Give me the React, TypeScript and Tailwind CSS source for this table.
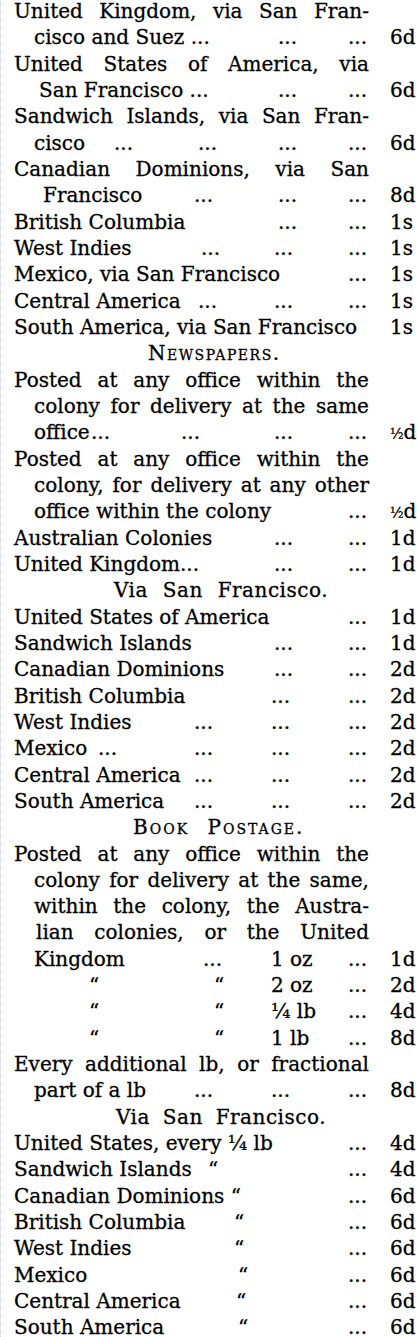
type Mark = [string, string];

type Line =
  | { k: "j"; pad: string; text: string }
  | { k: "r"; pad: string; text: string; marks?: Mark[]; price?: string }
  | { k: "h"; pad: string; text: string; cls: string };

const D = "...";

const lines: Line[] = [
  { k: "j", pad: "pl-[13px]", text: "United Kingdom, via San Fran-" },
  { k: "r", pad: "pl-[33px]", text: "cisco and Suez ...", marks: [["pl-[277px]", D], ["pl-[347px]", D]], price: "6d" },
  { k: "j", pad: "pl-[13px]", text: "United States of America, via" },
  { k: "r", pad: "pl-[38px]", text: "San Francisco ...", marks: [["pl-[277px]", D], ["pl-[347px]", D]], price: "6d" },
  { k: "j", pad: "pl-[13px]", text: "Sandwich Islands, via San Fran-" },
  { k: "r", pad: "pl-[33px]", text: "cisco", marks: [["pl-[113px]", D], ["pl-[197px]", D], ["pl-[277px]", D], ["pl-[347px]", D]], price: "6d" },
  { k: "j", pad: "pl-[13px]", text: "Canadian Dominions, via San" },
  { k: "r", pad: "pl-[42px]", text: "Francisco", marks: [["pl-[193px]", D], ["pl-[277px]", D], ["pl-[347px]", D]], price: "8d" },
  { k: "r", pad: "pl-[13px]", text: "British Columbia", marks: [["pl-[277px]", D], ["pl-[347px]", D]], price: "1s" },
  { k: "r", pad: "pl-[13px]", text: "West Indies", marks: [["pl-[200px]", D], ["pl-[273px]", D], ["pl-[347px]", D]], price: "1s" },
  { k: "r", pad: "pl-[13px]", text: "Mexico, via San Francisco", marks: [["pl-[347px]", D]], price: "1s" },
  { k: "r", pad: "pl-[13px]", text: "Central America", marks: [["pl-[197px]", D], ["pl-[273px]", D], ["pl-[347px]", D]], price: "1s" },
  { k: "r", pad: "pl-[13px]", text: "South America, via San Francisco", price: "1s" },
  { k: "h", pad: "pl-[147px]", text: "Newspapers.", cls: "tracking-[1.5px] [font-variant-caps:small-caps]" },
  { k: "j", pad: "pl-[13px]", text: "Posted at any office within the" },
  { k: "j", pad: "pl-[33px]", text: "colony for delivery at the same" },
  { k: "r", pad: "pl-[33px]", text: "office", marks: [["pl-[90px]", D], ["pl-[180px]", D], ["pl-[273px]", D], ["pl-[347px]", D]], price: "½d" },
  { k: "j", pad: "pl-[13px]", text: "Posted at any office within the" },
  { k: "j", pad: "pl-[33px]", text: "colony, for delivery at any other" },
  { k: "r", pad: "pl-[33px]", text: "office within the colony", marks: [["pl-[347px]", D]], price: "½d" },
  { k: "r", pad: "pl-[13px]", text: "Australian Colonies", marks: [["pl-[273px]", D], ["pl-[347px]", D]], price: "1d" },
  { k: "r", pad: "pl-[13px]", text: "United Kingdom...", marks: [["pl-[273px]", D], ["pl-[347px]", D]], price: "1d" },
  { k: "h", pad: "pl-[113px]", text: "Via San Francisco.", cls: "tracking-[0.5px] [word-spacing:8px]" },
  { k: "r", pad: "pl-[13px]", text: "United States of America", marks: [["pl-[347px]", D]], price: "1d" },
  { k: "r", pad: "pl-[13px]", text: "Sandwich Islands", marks: [["pl-[273px]", D], ["pl-[347px]", D]], price: "1d" },
  { k: "r", pad: "pl-[13px]", text: "Canadian Dominions", marks: [["pl-[273px]", D], ["pl-[347px]", D]], price: "2d" },
  { k: "r", pad: "pl-[13px]", text: "British Columbia", marks: [["pl-[270px]", D], ["pl-[347px]", D]], price: "2d" },
  { k: "r", pad: "pl-[13px]", text: "West Indies", marks: [["pl-[193px]", D], ["pl-[270px]", D], ["pl-[347px]", D]], price: "2d" },
  { k: "r", pad: "pl-[13px]", text: "Mexico", marks: [["pl-[97px]", D], ["pl-[193px]", D], ["pl-[270px]", D], ["pl-[347px]", D]], price: "2d" },
  { k: "r", pad: "pl-[13px]", text: "Central America", marks: [["pl-[193px]", D], ["pl-[270px]", D], ["pl-[347px]", D]], price: "2d" },
  { k: "r", pad: "pl-[13px]", text: "South America", marks: [["pl-[193px]", D], ["pl-[270px]", D], ["pl-[347px]", D]], price: "2d" },
  { k: "h", pad: "pl-[132px]", text: "Book Postage.", cls: "tracking-[2px] [word-spacing:10px] [font-variant-caps:small-caps]" },
  { k: "j", pad: "pl-[13px]", text: "Posted at any office within the" },
  { k: "j", pad: "pl-[33px]", text: "colony for delivery at the same," },
  { k: "j", pad: "pl-[33px]", text: "within the colony, the Austra-" },
  { k: "j", pad: "pl-[35px]", text: "lian colonies, or the United" },
  { k: "r", pad: "pl-[33px]", text: "Kingdom", marks: [["pl-[202px]", D], ["pl-[270px]", "1 oz"], ["pl-[347px]", D]], price: "1d" },
  { k: "r", pad: "pl-[88px]", text: "“", marks: [["pl-[213px]", "“"], ["pl-[270px]", "2 oz"], ["pl-[347px]", D]], price: "2d" },
  { k: "r", pad: "pl-[88px]", text: "“", marks: [["pl-[213px]", "“"], ["pl-[270px]", "¼ lb"], ["pl-[347px]", D]], price: "4d" },
  { k: "r", pad: "pl-[88px]", text: "“", marks: [["pl-[213px]", "“"], ["pl-[270px]", "1 lb"], ["pl-[347px]", D]], price: "8d" },
  { k: "j", pad: "pl-[13px]", text: "Every additional lb, or fractional" },
  { k: "r", pad: "pl-[33px]", text: "part of a lb", marks: [["pl-[193px]", D], ["pl-[270px]", D], ["pl-[347px]", D]], price: "8d" },
  { k: "h", pad: "pl-[115px]", text: "Via San Francisco.", cls: "tracking-[0.5px] [word-spacing:6px]" },
  { k: "r", pad: "pl-[13px]", text: "United States, every ¼ lb", marks: [["pl-[347px]", D]], price: "4d" },
  { k: "r", pad: "pl-[13px]", text: "Sandwich Islands", marks: [["pl-[207px]", "“"], ["pl-[347px]", D]], price: "4d" },
  { k: "r", pad: "pl-[13px]", text: "Canadian Dominions “", marks: [["pl-[347px]", D]], price: "6d" },
  { k: "r", pad: "pl-[13px]", text: "British Columbia", marks: [["pl-[233px]", "“"], ["pl-[347px]", D]], price: "6d" },
  { k: "r", pad: "pl-[13px]", text: "West Indies", marks: [["pl-[233px]", "“"], ["pl-[347px]", D]], price: "6d" },
  { k: "r", pad: "pl-[13px]", text: "Mexico", marks: [["pl-[237px]", "“"], ["pl-[347px]", D]], price: "6d" },
  { k: "r", pad: "pl-[13px]", text: "Central America", marks: [["pl-[235px]", "“"], ["pl-[347px]", D]], price: "6d" },
  { k: "r", pad: "pl-[13px]", text: "South America", marks: [["pl-[237px]", "“"], ["pl-[347px]", D]], price: "6d" },
];

function Price({ p }: { p?: string }) {
  if (p === "½d") {
    return (
      <span className="whitespace-nowrap">
        <span className="text-[14px]">½</span>d
      </span>
    );
  }
  return <span className="whitespace-nowrap">{p}</span>;
}

function Row({ line }: { line: Line }) {
  if (line.k === "j") {
    return (
      <div className={`flex h-[26.34px] w-[368px] justify-between ${line.pad}`}>
        {line.text.split(" ").map((w, i) => (
          <span key={i}>{w}</span>
        ))}
      </div>
    );
  }
  if (line.k === "h") {
    return <div className={`h-[26.34px] whitespace-nowrap ${line.pad} ${line.cls}`}>{line.text}</div>;
  }
  return (
    <div className="flex h-[26.34px]">
      <div className="grid w-[389px] shrink-0">
        <span className={`[grid-area:1/1] whitespace-nowrap ${line.pad}`}>{line.text}</span>
        {line.marks?.map((m, i) => (
          <span key={i} className={`[grid-area:1/1] whitespace-nowrap ${m[0]}`}>
            {m[1]}
          </span>
        ))}
      </div>
      <Price p={line.price} />
    </div>
  );
}

export default function App() {
  return (
    <div className="h-[1337px] w-[417px] overflow-hidden border-l border-dotted border-gray-300 bg-white [font-family:'DejaVu_Serif',serif] text-[20px] leading-[26.34px] text-black [-webkit-text-stroke:0.3px_#000]">
      <div className="-mt-[2px]">
        {lines.map((l, i) => (
          <Row key={i} line={l} />
        ))}
      </div>
    </div>
  );
}
